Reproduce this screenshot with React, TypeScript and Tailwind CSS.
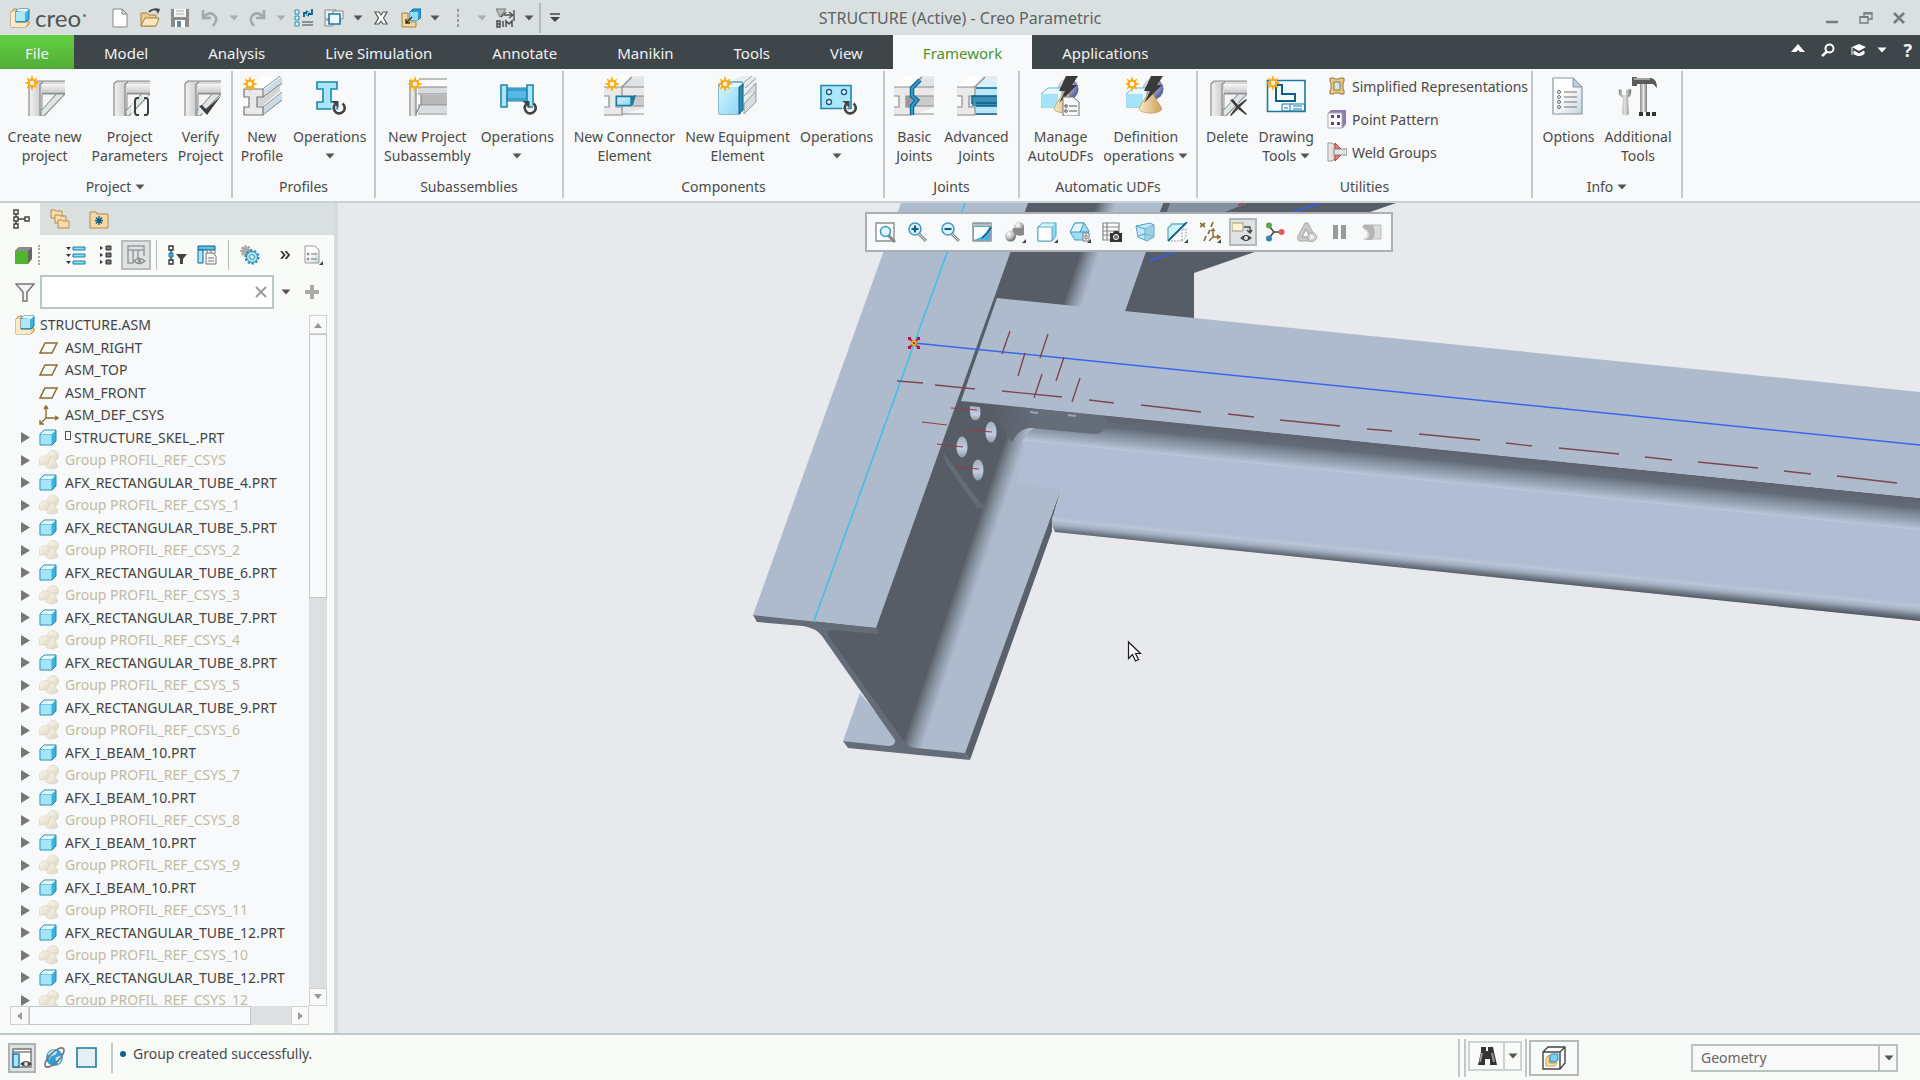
import React from "react";

type IconProps = { children: React.ReactNode; className: string; box: string };

function Icon({ children, className, box }: IconProps) {
  return (
    <svg viewBox={box} className={className} fill="none" aria-hidden="true">
      {children}
    </svg>
  );
}

function Caret({ className = "text-[#555]" }: { className?: string }) {
  return (
    <svg viewBox="0 0 10 6" className={`inline-block h-[6px] w-[10px] shrink-0 ${className}`} aria-hidden="true">
      <path d="M0.500 0.500h9L5 5.500z" fill="currentColor" />
    </svg>
  );
}

/* ---------- shared drawing parts for the ribbon icons ---------- */

function Defs() {
  return (
    <svg className="absolute h-0 w-0" aria-hidden="true">
      <defs>
        <linearGradient id="steel" x1="0" y1="0" x2="1" y2="0">
          <stop offset="0" stopColor="#f2f2f2" />
          <stop offset="1" stopColor="#cfcfcf" />
        </linearGradient>
        <linearGradient id="steelV" x1="0" y1="0" x2="0" y2="1">
          <stop offset="0" stopColor="#f7f7f7" />
          <stop offset="1" stopColor="#c9c9c9" />
        </linearGradient>
        <linearGradient id="ice" x1="0" y1="0" x2="1" y2="1">
          <stop offset="0" stopColor="#d6f3fd" />
          <stop offset="1" stopColor="#8ad8f7" />
        </linearGradient>
        <linearGradient id="tan" x1="0" y1="0" x2="1" y2="0">
          <stop offset="0" stopColor="#fbe9c8" />
          <stop offset="1" stopColor="#c99f55" />
        </linearGradient>
        <linearGradient id="metal" x1="0" y1="0" x2="1" y2="0">
          <stop offset="0" stopColor="#8a8a8a" />
          <stop offset="0.5" stopColor="#e2e2e2" />
          <stop offset="1" stopColor="#777" />
        </linearGradient>
        <linearGradient id="paper" x1="0" y1="0" x2="1" y2="1">
          <stop offset="0.4" stopColor="#fff" />
          <stop offset="1" stopColor="#c3d4de" />
        </linearGradient>
        <radialGradient id="ball" cx="0.35" cy="0.3" r="0.8">
          <stop offset="0" stopColor="#fff" />
          <stop offset="0.5" stopColor="#bdbdbd" />
          <stop offset="1" stopColor="#555" />
        </radialGradient>
        <radialGradient id="violet" cx="0.3" cy="0.3" r="0.8">
          <stop offset="0" stopColor="#f2f3fb" />
          <stop offset="1" stopColor="#4c5796" />
        </radialGradient>
        <linearGradient id="cream" x1="0" y1="0" x2="1" y2="1">
          <stop offset="0" stopColor="#fbf8ec" />
          <stop offset="1" stopColor="#dcd5c0" />
        </linearGradient>
      </defs>
    </svg>
  );
}

function Burst({ x = 7, y = 7 }: { x?: number; y?: number }) {
  return (
    <g transform={`translate(${x} ${y})`}>
      <path
        d="M0-8L1.600-3.600 5.500-5.500 3.600-1.600 8 0 3.600 1.600 5.500 5.500 1.600 3.600 0 8-1.600 3.600-5.500 5.500-3.600 1.600-8 0-3.600-1.600-5.500-5.500-1.600-3.600z"
        fill="#ffab12"
      />
      <circle r="2.800" fill="#fff8d8" stroke="#f39a12" strokeWidth="0.800" />
    </g>
  );
}

function Cycle({ x = 30, y = 31 }: { x?: number; y?: number }) {
  return (
    <g transform={`translate(${x} ${y})`}>
      <path d="M3.500-4.500A5.500 5.500 0 1 1-4-3.600" stroke="#fff" strokeWidth="5" opacity="0.700" />
      <path d="M3.500-4.500A5.500 5.500 0 1 1-4-3.600" stroke="#444" strokeWidth="2.600" />
      <path d="M-7.500-7h7v7z" fill="#444" />
    </g>
  );
}

function FrameBase() {
  return (
    <g>
      <path d="M4 7l3-2h33v3H17v32H4z" fill="#d9d9d9" />
      <path d="M4 7.500h11V40H4z" fill="url(#steel)" />
      <path d="M4 40V7.500L7 5h33M15 40V8l3-2" stroke="#8a8a8a" strokeWidth="1.200" />
      <path d="M17 8h23v9H17z" fill="url(#steelV)" />
      <path d="M17 17.500h23" stroke="#8a8a8a" strokeWidth="1.400" />
      <path d="M31 18h9L19 40h-3v-6z" fill="#dfe5e5" stroke="#8e9494" strokeWidth="1.200" />
      <path d="M17 18v16l14-16z" fill="#f4f4f4" stroke="#8e9494" />
    </g>
  );
}

function BeamEnd() {
  return (
    <g>
      <path d="M2 11L14 0h26v32L18 39H0V31h5V20H0V11z" fill="#e9e9ea" />
      <path d="M0 11L12 0h14L16 11z" fill="#fff" />
      <path d="M18 11L26 3h14v9H18z" fill="#dfe2e6" />
      <path d="M18 20h22v10H18z" fill="#cbcbcb" />
      <path d="M0 11h18v9h-6v11h6v8H0M0 20h5v11H0M18 11L28 1M18 11h22M18 20h22M18 30h22M18 38h22" stroke="#8c8c8c" strokeWidth="1.200" />
    </g>
  );
}

function UdfBase() {
  return (
    <g>
      <circle cx="27" cy="13" r="10.500" fill="url(#violet)" />
      <path d="M0 18l7-6h14v16l-4 3H0z" fill="#eaf8fd" stroke="#58b7d9" />
      <path d="M0.500 18H17v13H0.500z" fill="#a4e3f9" />
      <path d="M22 17c-4 8-8 12-9 16 3 5 19 6 23 0-2-5-6-8-9-16z" fill="url(#tan)" stroke="#c79c52" strokeWidth="0.800" />
      <path d="M25 0h12l-6 9h5L18 27l6-12h-6z" fill="#3a3a3a" />
    </g>
  );
}

const ribbonIcons: Record<string, React.ReactNode> = {
  create: (
    <>
      <FrameBase />
      <Burst />
    </>
  ),
  params: (
    <>
      <FrameBase />
      <path d="M29 21h-3q-3 0-3 3v12q0 3 3 3h3M33 21h3q3 0 3 3v12q0 3-3 3h-3" stroke="#fff" strokeWidth="4" opacity="0.600" />
      <path d="M29 22h-2q-2 0-2 3v11q0 3 2 3h2M34 22h2q2 0 2 3v11q0 3-2 3h-2" stroke="#3f3f3f" strokeWidth="2" />
    </>
  ),
  verify: (
    <>
      <FrameBase />
      <path d="M19 31l6 7 14-15" stroke="#fff" strokeWidth="5" opacity="0.600" />
      <path d="M18 30l3-1 4 4 15-13-14 19z" fill="#3f3f3f" />
    </>
  ),
  profile: (
    <>
      <path d="M20 1h20L22 14H3z" fill="#fff" />
      <path d="M22 14L40 0v9L22 22v9l18-14v8L20 39z" fill="#c9dbe4" />
      <path d="M15 21l7-1 16-13v8L20 30h-5z" fill="#d5d5d5" />
      <path d="M2 13h19v8h-6v10h6v8H2v-8h5V21H2z" fill="#e9e9e9" stroke="#777" strokeWidth="1.200" />
      <path d="M21 13L38 0M21 21L40 7M21 31l19-15M21 39l19-15" stroke="#888" />
      <Burst x={8} y={8} />
    </>
  ),
  profileOps: (
    <>
      <path d="M7 6h20v7h-6v13h6v7H7v-7h6V13H7z" fill="#a9e6fb" stroke="#1f87ad" strokeWidth="1.600" />
      <Cycle x={29} y={32} />
    </>
  ),
  subassembly: (
    <>
      <path d="M3 4h6v36H3z" fill="url(#steel)" />
      <path d="M11 2h29v36H11z" fill="#fbfbfb" />
      <path d="M11 11h29v7H11zM11 30h29v7H11z" fill="#d9dcde" />
      <path d="M14 19h26v10H14z" fill="#b9b9b9" />
      <path d="M3 4v36M9 4v36M11 11h29M11 18h29M14 19v10M11 29h29M11 38h29M9 38l4-9M12 3h28" stroke="#858585" strokeWidth="1.200" />
      <Burst x={8} y={8} />
    </>
  ),
  subOps: (
    <>
      <path d="M10 12h20v13H10z" fill="#57b7e6" stroke="#1f87ad" />
      <path d="M10 14h20M10 23h20" stroke="#1f87ad" strokeWidth="1.200" />
      <path d="M4 9h6v22H4zM30 9h6v22h-6z" fill="#a9e6fb" stroke="#1f87ad" strokeWidth="1.600" />
      <Cycle x={33} y={32} />
    </>
  ),
  connector: (
    <>
      <BeamEnd />
      <path d="M12 20h16l4-1-3 10H12z" fill="#1c7aa5" />
      <path d="M12.500 20.500H27v9H12.500z" fill="url(#ice)" stroke="#1c7aa5" strokeWidth="1.400" />
      <Burst x={8} y={8} />
    </>
  ),
  equipment: (
    <>
      <path d="M8 8L22 0h16v8L26 38l-4-28z" fill="#e6eef2" />
      <path d="M26 20L38 7v8L26 28v10l12-12V16" fill="#d5dde1" stroke="#999" />
      <path d="M24 8L34 0M27 12L38 2" stroke="#999" />
      <path d="M1 8l3-2h20l1 2-3 30H1z" fill="#f0fbff" stroke="#1c7aa5" />
      <path d="M1 11h20v27H1z" fill="url(#ice)" />
      <path d="M21 11l4-3v26l-4 4z" fill="#2b8cb4" stroke="#0f5f87" />
      <Burst x={7} y={8} />
    </>
  ),
  plateOps: (
    <>
      <path d="M4 9.500h30v23H4z" fill="#a9e6fb" stroke="#1f87ad" strokeWidth="1.600" />
      <g fill="#fff" stroke="#1f5f7f" strokeWidth="1.400">
        <circle cx="12" cy="16" r="2.500" />
        <circle cx="27" cy="16" r="2.500" />
        <circle cx="12" cy="26" r="2.500" />
      </g>
      <Cycle x={33} y={32} />
    </>
  ),
  basic: (
    <>
      <BeamEnd />
      <path d="M12 20h10v11H12z" fill="#999" />
      <path d="M26 4l-8 8v8l5 4-5 6v9" stroke="#0f6a99" strokeWidth="4.500" />
      <path d="M26 4l-8 8v8l5 4-5 6v9" stroke="#3fa5d3" strokeWidth="1.600" />
    </>
  ),
  advanced: (
    <>
      <BeamEnd />
      <path d="M19 11L28 3h12v9H19z" fill="#d5f2fb" />
      <path d="M19 12h21v26H19z" fill="#b9e9f9" />
      <path d="M15 20h25v10H15z" fill="#3f8fb5" />
      <path d="M40 20H15v8M19 12h21M19 30h21M19 38h21M40 27H19" stroke="#0f5f87" strokeWidth="1.400" />
    </>
  ),
  manage: (
    <>
      <UdfBase />
      <path d="M22 21h10l6 5v14H22z" fill="#f4f8fa" stroke="#777" />
      <path d="M28 30h8M28 35h8" stroke="#555" />
      <circle cx="25" cy="30" r="1.300" stroke="#555" />
      <circle cx="25" cy="35" r="1.300" stroke="#555" />
    </>
  ),
  definition: (
    <>
      <UdfBase />
      <Burst x={6} y={8} />
    </>
  ),
  remove: (
    <>
      <FrameBase />
      <path d="M25 24l15 15M40 24L25 39" stroke="#fff" strokeWidth="5" opacity="0.600" />
      <path d="M23 24l3-1 5 6 8-6 1 1-7 7 7 7-1 1-8-6-7 7-1-1 6-8z" fill="#3f3f3f" />
    </>
  ),
  drawing: (
    <>
      <path d="M1.500 4.500H39v31H1.500z" fill="#f4fbff" stroke="#1c7aa5" strokeWidth="1.600" />
      <path d="M10 9h6v9h13v7H10z" stroke="#0f5f87" strokeWidth="2" />
      <path d="M16 28h23v7H16zM24 28v7M18 32h4M27 30h9M27 33h9" stroke="#1c7aa5" />
      <Burst x={7} y={7} />
    </>
  ),
  options: (
    <>
      <path d="M5 2h20l9 9v27H5z" fill="url(#paper)" stroke="#8a979f" strokeWidth="1.200" />
      <path d="M25 2v9h9z" fill="#c0d0da" stroke="#8a979f" />
      <path d="M16 16h13M16 21h13M16 26h13M16 31h13" stroke="#777" strokeWidth="1.200" />
      <g stroke="#666">
        <circle cx="11" cy="16" r="1.500" />
        <circle cx="11" cy="21" r="1.500" />
        <circle cx="11" cy="26" r="1.500" />
        <circle cx="11" cy="31" r="1.500" />
      </g>
    </>
  ),
  tools: (
    <>
      <path d="M1 13l3 1v5h4v-5l5-1c1 5-1 8-3 9l1 16q-3 3-7 0l1-16c-4-2-5-5-4-9z" fill="url(#metal)" />
      <path d="M22 8h7v28h-7z" fill="url(#metal)" />
      <path d="M14 1h5v1h14q6 1 6 10l-4-4H19v2h-5z" fill="#5b5b5b" />
      <path d="M16 3h16" stroke="#bbb" strokeWidth="1.500" />
      <path d="M21 36h4v4h-4zM28 36h4v4h-4zM34 36h4v4h-4z" fill="#333" />
    </>
  ),
};

type Tool = { icon: string; lines: string[]; caret?: "below" | "inline" };

function RibbonButton({ icon, lines, caret }: Tool) {
  return (
    <button type="button" className="flex flex-col items-center px-[5px] hover:bg-[#e4eef2]">
      <Icon box="0 0 40 40" className="h-10 w-10">
        {ribbonIcons[icon]}
      </Icon>
      <span className="mt-[11px] flex flex-col items-center whitespace-nowrap">
        <span>{lines[0]}</span>
        {caret === "below" ? (
          <span className="flex h-[19px] items-center">
            <Caret />
          </span>
        ) : (
          lines[1] && (
            <span className="flex items-center gap-1">
              {lines[1]}
              {caret === "inline" && <Caret />}
            </span>
          )
        )}
      </span>
    </button>
  );
}

function RibbonGroup({
  title,
  tools,
  className,
  caret,
  children,
}: {
  title: string;
  tools: Tool[];
  className: string;
  caret?: boolean;
  children?: React.ReactNode;
}) {
  return (
    <section
      aria-label={title}
      className={`flex shrink-0 flex-col items-center justify-between border-r-2 border-[#c3c9cb] ${className}`}
    >
      <div className="flex w-full justify-center pt-[5px]">
        {tools.map((t) => (
          <RibbonButton key={t.icon} {...t} />
        ))}
        {children}
      </div>
      <div className="flex items-center gap-1 pb-[2px]">
        {title}
        {caret && <Caret />}
      </div>
    </section>
  );
}

function UtilityLinks() {
  const items: { label: string; art: React.ReactNode }[] = [
    {
      label: "Simplified Representations",
      art: (
        <>
          <path d="M3 2h4l1 1h4l1-1h4v4l-1 1v6l1 1v4h-4l-1-1H8l-1 1H3v-4l1-1V7L3 6z" fill="#e8c687" stroke="#9a7433" />
          <path d="M7 6h6v8H7z" fill="#c4ecf8" stroke="#9a7433" />
        </>
      ),
    },
    {
      label: "Point Pattern",
      art: (
        <>
          <path d="M1 4l3-3h15v14l-3 4H1z" fill="#8f7cb5" />
          <path d="M1 4h14v15H1z" fill="#fff" stroke="#aaa" />
          <path d="M4 6h3v3H4zM10 6h3v3h-3zM4 13h3v3H4zM10 13h3v3h-3z" fill="#5b3f92" />
        </>
      ),
    },
    {
      label: "Weld Groups",
      art: (
        <>
          <path d="M1 1h4l3 2v14l-3 2H1z" fill="url(#steel)" stroke="#999" />
          <path d="M8 1l6 6H8zM8 19l6-6H8z" fill="#f07a7a" stroke="#c33" />
          <path d="M7 7h13v6H7z" fill="#e3e3e3" stroke="#888" />
        </>
      ),
    },
  ];
  return (
    <div className="flex flex-col gap-[13px] pl-2">
      {items.map((i) => (
        <button key={i.label} type="button" className="flex items-center gap-[5px] whitespace-nowrap hover:bg-[#e4eef2]">
          <Icon box="0 0 20 20" className="h-5 w-5">
            {i.art}
          </Icon>
          {i.label}
        </button>
      ))}
    </div>
  );
}

/* ---------- title bar ---------- */

const quickArt: Record<string, React.ReactNode> = {
  New: <path d="M3 1h9l5 5v13H3zM12 1v5h5" fill="#fff" stroke="#888" />,
  Open: (
    <>
      <path d="M1 5h6l2 2h7v11H1z" fill="#e9c98d" stroke="#a8833f" />
      <path d="M1 18l4-8h14l-3 8z" fill="#fbe7bf" stroke="#a8833f" />
      <path d="M9 4q4-4 8-2" stroke="#444" strokeWidth="1.800" />
      <path d="M15 0l5 1-2 5z" fill="#444" />
    </>
  ),
  Save: (
    <>
      <path d="M1 1h18v18H1z" fill="#8b8b8b" />
      <path d="M4 1h12v8H4z" fill="#f5f5f5" />
      <path d="M5 12h10v7H5z" fill="#fff" />
      <path d="M7 13h4v6H7z" fill="#5d86a5" />
      <path d="M6 3h8M6 6h8" stroke="#aaa" />
    </>
  ),
  Undo: <path d="M3 2v8h8M4 9q5-6 10-2t-1 11" stroke="#a3a8a8" strokeWidth="2.600" />,
  Redo: <path d="M17 2v8H9M16 9Q11 3 6 7t1 11" stroke="#a3a8a8" strokeWidth="2.600" />,
  Regenerate: (
    <>
      <path d="M1 2h4v4H1zM1 8h4v4H1zM1 14h4v4H1z" fill="#d5f2fb" stroke="#2b8cb4" />
      <path d="M8 14h11M8 17h11" stroke="#777" strokeWidth="1.400" />
      <path d="M10 9V5h3M18 1v5h-4" stroke="#0f5f87" strokeWidth="1.800" />
      <path d="M12 2l4 3-4 3zM15 3l-3 3 3 3z" fill="#0f5f87" />
    </>
  ),
  Windows: (
    <>
      <path d="M1 2h11v9H1z" fill="#eee" stroke="#888" />
      <path d="M9 3h10v8H9zM1 12h8v6H1z" fill="#f4f4f4" stroke="#888" />
      <path d="M5 6h11v10H5z" fill="#e9f8fd" stroke="#1c7aa5" strokeWidth="1.600" />
    </>
  ),
  "Close window": (
    <path d="M4 4h4l2 3 2-3h4l-3.500 6L16 16h-4l-2-3-2 3H4l3.500-6z" fill="#fff" stroke="#555" strokeWidth="1.200" />
  ),
  Placement: (
    <>
      <path d="M1 5h6v9h8v5H1z" fill="#f4d59a" stroke="#a8833f" />
      <path d="M9 4l3-3h8v8l-3 3H9z" fill="#2b9bd0" stroke="#0f6a99" />
      <path d="M9 4h8v8H9z" fill="#8fdcf8" />
      <path d="M11 9l-6 6M5 11v4h4" stroke="#333" strokeWidth="1.500" />
    </>
  ),
  Separator: <path d="M10 1v3M10 6v3M10 11v3M10 16v3" stroke="#888" strokeWidth="1.600" />,
  BIM: (
    <>
      <path d="M1 1h10L5 9z" fill="#bbb" stroke="#777" />
      <path d="M6 9l5-5M9 7h8M14 4l4 3-4 3M19 2v11" stroke="#555" strokeWidth="1.400" />
      <path d="M2 13v6h3v-3H2h3v-3zM8 13v6M11 19v-6l3 3 3-3v6" stroke="#444" strokeWidth="1.400" />
    </>
  ),
};

function QuickButton({ name, caret, faded }: { name: string; caret?: boolean; faded?: boolean }) {
  return (
    <span className="flex items-center">
      <button type="button" aria-label={name} className="flex w-[30px] justify-center">
        <Icon box="0 0 20 20" className="h-5 w-5">
          {quickArt[name]}
        </Icon>
      </button>
      {caret && (
        <button type="button" aria-label={`${name} menu`} className="flex w-[17px] justify-center">
          <Caret className={faded ? "text-[#aab0b0]" : "text-[#555]"} />
        </button>
      )}
    </span>
  );
}

function CreoMark({ className }: { className: string }) {
  return (
    <Icon box="0 0 20 20" className={className}>
      <path d="M1 4l3-3h3v12h12v3l-3 3H1z" fill="#f2d193" stroke="#b28a42" />
      <path d="M1 4h4v11h11v4H1z" fill="#fdebc8" />
      <path d="M6 3l3-2h10v10l-3 3H6z" fill="#3fb2df" stroke="#1c7aa5" />
      <path d="M6 4h9v9H6z" fill="#aee6f9" />
      <path d="M6 3l3-2h10l-3 3z" fill="#e8f9fe" />
    </Icon>
  );
}

function TitleBar() {
  return (
    <header className="relative flex h-[35px] shrink-0 items-center bg-[#dae0df]">
      <div className="flex w-[105px] items-center gap-[5px] pl-[10px]">
        <CreoMark className="h-5 w-5" />
        <span className="flex gap-[2px] font-['Lato',sans-serif] text-[24px] leading-[24px] text-[#4d5558]">
          creo
          <span className="mt-2 h-[3px] w-[3px] rounded-full bg-[#6b7376]" />
        </span>
      </div>
      <QuickButton name="New" />
      <QuickButton name="Open" />
      <QuickButton name="Save" />
      <QuickButton name="Undo" caret faded />
      <QuickButton name="Redo" caret faded />
      <QuickButton name="Regenerate" />
      <QuickButton name="Windows" caret />
      <QuickButton name="Close window" />
      <QuickButton name="Placement" caret />
      <QuickButton name="Separator" caret faded />
      <QuickButton name="BIM" caret />
      <button type="button" aria-label="Customize toolbar" className="ml-[2px] flex h-[30px] items-center border-l-2 border-[#b4bbbb] pl-2">
        <Icon box="0 0 12 10" className="h-[10px] w-3">
          <path d="M1 1h10" stroke="#444" strokeWidth="1.500" />
          <path d="M1 4h10L6 9z" fill="#444" />
        </Icon>
      </button>
      <h1 className="pointer-events-none absolute inset-0 flex items-center justify-center text-[16px] text-[#5b6366]">
        STRUCTURE (Active) - Creo Parametric
      </h1>
      <div className="ml-auto flex items-center gap-[18px] pr-[14px] text-[#777d7e]">
        <button type="button" aria-label="Minimize">
          <Icon box="0 0 16 14" className="h-[14px] w-4">
            <path d="M2 11h12" stroke="currentColor" strokeWidth="2.500" />
          </Icon>
        </button>
        <button type="button" aria-label="Restore">
          <Icon box="0 0 16 14" className="h-[14px] w-4">
            <path d="M2 6h8v6H2zM6 6V2h8v6h-4" stroke="currentColor" strokeWidth="1.400" />
            <path d="M2 6h8M6 2.500h8" stroke="currentColor" strokeWidth="2.200" />
          </Icon>
        </button>
        <button type="button" aria-label="Close">
          <Icon box="0 0 14 14" className="h-[14px] w-[14px]">
            <path d="M2 2l10 10M12 2L2 12" stroke="currentColor" strokeWidth="2.600" />
          </Icon>
        </button>
      </div>
    </header>
  );
}

function TabBar() {
  const tabs = ["Model", "Analysis", "Live Simulation", "Annotate", "Manikin", "Tools", "View", "Framework", "Applications"];
  return (
    <nav className="flex h-[34px] shrink-0 bg-[#3e4649] text-[15px] text-[#f0f2f2]">
      <button type="button" className="w-[74px] bg-gradient-to-b from-[#63cf42] to-[#52ae37] pt-[2px]">
        File
      </button>
      {tabs.map((t) => (
        <button
          key={t}
          type="button"
          className={t === "Framework" ? "bg-[#f8f9fb] px-[30px] pt-[2px] text-[#4f9030]" : "px-[30px] pt-[2px]"}
        >
          {t}
        </button>
      ))}
      <div className="ml-auto flex items-center gap-4 pr-2 pb-1">
        <button type="button" aria-label="Collapse ribbon">
          <Icon box="0 0 14 10" className="mb-1 h-[10px] w-[14px]">
            <path d="M0 9l7-8 7 8h-5L7 7 5 9z" fill="#fff" />
          </Icon>
        </button>
        <button type="button" aria-label="Search">
          <Icon box="0 0 14 14" className="h-[14px] w-[14px]">
            <circle cx="8.500" cy="5.500" r="4" stroke="#fff" strokeWidth="2" />
            <path d="M6 8.500L1 13" stroke="#fff" strokeWidth="2.400" />
          </Icon>
        </button>
        <button type="button" aria-label="Learning" className="flex items-center gap-[10px]">
          <Icon box="0 0 16 12" className="h-3 w-4">
            <path d="M8 0l7 3-7 4-7-4z" fill="#fff" />
            <path d="M3 7l5 3 5-3v3l-5 2-5-2zM1 3v8" fill="#fff" stroke="#fff" />
          </Icon>
          <Caret className="text-white" />
        </button>
        <button type="button" aria-label="Help" className="text-[18px] font-bold leading-[18px]">
          ?
        </button>
      </div>
    </nav>
  );
}

function Ribbon() {
  return (
    <div className="flex h-[134px] shrink-0 overflow-hidden border-b-2 border-[#c8d2d2] bg-[#f8f9fb] pt-[2px] pb-[3px] text-[14px] leading-[19px] text-[#4a4a4a]">
      <RibbonGroup
        title="Project"
        caret
        className="w-[233px]"
        tools={[
          { icon: "create", lines: ["Create new", "project"] },
          { icon: "params", lines: ["Project", "Parameters"] },
          { icon: "verify", lines: ["Verify", "Project"] },
        ]}
      />
      <RibbonGroup
        title="Profiles"
        className="w-[143px]"
        tools={[
          { icon: "profile", lines: ["New", "Profile"] },
          { icon: "profileOps", lines: ["Operations"], caret: "below" },
        ]}
      />
      <RibbonGroup
        title="Subassemblies"
        className="w-[188px]"
        tools={[
          { icon: "subassembly", lines: ["New Project", "Subassembly"] },
          { icon: "subOps", lines: ["Operations"], caret: "below" },
        ]}
      />
      <RibbonGroup
        title="Components"
        className="w-[321px]"
        tools={[
          { icon: "connector", lines: ["New Connector", "Element"] },
          { icon: "equipment", lines: ["New Equipment", "Element"] },
          { icon: "plateOps", lines: ["Operations"], caret: "below" },
        ]}
      />
      <RibbonGroup
        title="Joints"
        className="w-[135px]"
        tools={[
          { icon: "basic", lines: ["Basic", "Joints"] },
          { icon: "advanced", lines: ["Advanced", "Joints"] },
        ]}
      />
      <RibbonGroup
        title="Automatic UDFs"
        className="w-[178px]"
        tools={[
          { icon: "manage", lines: ["Manage", "AutoUDFs"] },
          { icon: "definition", lines: ["Definition", "operations"], caret: "inline" },
        ]}
      />
      <RibbonGroup
        title="Utilities"
        className="w-[335px]"
        tools={[
          { icon: "remove", lines: ["Delete"] },
          { icon: "drawing", lines: ["Drawing", "Tools"], caret: "inline" },
        ]}
      >
        <UtilityLinks />
      </RibbonGroup>
      <RibbonGroup
        title="Info"
        caret
        className="w-[150px]"
        tools={[
          { icon: "options", lines: ["Options"] },
          { icon: "tools", lines: ["Additional", "Tools"] },
        ]}
      />
    </div>
  );
}

/* ---------- model tree ---------- */

type NodeKind = "root" | "plane" | "csys" | "part" | "group" | "skeleton";

const treeNodes: [NodeKind, string][] = [
  ["root", "STRUCTURE.ASM"],
  ["plane", "ASM_RIGHT"],
  ["plane", "ASM_TOP"],
  ["plane", "ASM_FRONT"],
  ["csys", "ASM_DEF_CSYS"],
  ["skeleton", "STRUCTURE_SKEL_.PRT"],
  ["group", "Group PROFIL_REF_CSYS"],
  ["part", "AFX_RECTANGULAR_TUBE_4.PRT"],
  ["group", "Group PROFIL_REF_CSYS_1"],
  ["part", "AFX_RECTANGULAR_TUBE_5.PRT"],
  ["group", "Group PROFIL_REF_CSYS_2"],
  ["part", "AFX_RECTANGULAR_TUBE_6.PRT"],
  ["group", "Group PROFIL_REF_CSYS_3"],
  ["part", "AFX_RECTANGULAR_TUBE_7.PRT"],
  ["group", "Group PROFIL_REF_CSYS_4"],
  ["part", "AFX_RECTANGULAR_TUBE_8.PRT"],
  ["group", "Group PROFIL_REF_CSYS_5"],
  ["part", "AFX_RECTANGULAR_TUBE_9.PRT"],
  ["group", "Group PROFIL_REF_CSYS_6"],
  ["part", "AFX_I_BEAM_10.PRT"],
  ["group", "Group PROFIL_REF_CSYS_7"],
  ["part", "AFX_I_BEAM_10.PRT"],
  ["group", "Group PROFIL_REF_CSYS_8"],
  ["part", "AFX_I_BEAM_10.PRT"],
  ["group", "Group PROFIL_REF_CSYS_9"],
  ["part", "AFX_I_BEAM_10.PRT"],
  ["group", "Group PROFIL_REF_CSYS_11"],
  ["part", "AFX_RECTANGULAR_TUBE_12.PRT"],
  ["group", "Group PROFIL_REF_CSYS_10"],
  ["part", "AFX_RECTANGULAR_TUBE_12.PRT"],
  ["group", "Group PROFIL_REF_CSYS_12"],
];

function NodeIcon({ kind }: { kind: NodeKind }) {
  if (kind === "root") return <CreoMark className="h-5 w-5" />;
  return (
    <Icon box="0 0 20 20" className="h-5 w-5 shrink-0">
      {kind === "plane" && <path d="M6 5h12l-5 10H1z" stroke="#8a6d33" strokeWidth="1.500" />}
      {kind === "csys" && (
        <path d="M7 1v12h12M7 13l-6 6M5 4l2-3 2 3M16 11l3 2-3 2M1 15v4h4" stroke="#8a6d33" strokeWidth="1.400" />
      )}
      {(kind === "part" || kind === "skeleton") && (
        <>
          <path d="M1 6l4-4h12v11l-4 4H1z" fill="#36b3e2" stroke="#2b87a8" />
          <path d="M1.500 6.500h11v10h-11z" fill="#a5e5fa" />
          <path d="M1.500 6L5 2.500h11.500L13 6z" fill="#e4f8fe" />
        </>
      )}
      {kind === "group" && (
        <g fill="url(#cream)" stroke="#ddd7c6" strokeWidth="0.800">
          <circle cx="14" cy="6" r="5.500" />
          <path d="M0.500 9l3-3h8v7l-3 2h-8z" />
          <path d="M12 8l-5 9q5 4 12 0l-4-9z" />
        </g>
      )}
    </Icon>
  );
}

function ModelTree() {
  return (
    <ul className="min-w-0 flex-1 text-[14px] leading-[22px]">
      {treeNodes.map(([kind, label], i) => {
        const expandable = kind === "part" || kind === "group" || kind === "skeleton";
        return (
          <li
            key={i}
            className={`flex items-center whitespace-nowrap odd:h-[22px] even:h-[23px] ${
              kind === "group" ? "text-[#c2b9a3]" : "text-[#444]"
            }`}
          >
            {kind !== "root" && (
              <span className="flex w-6 shrink-0 justify-center pr-1">
                {expandable && (
                  <button type="button" aria-label={`Expand ${label}`}>
                    <Icon box="0 0 9 11" className="h-[11px] w-[9px]">
                      <path d="M0 0l9 5.500L0 11z" fill="#777" />
                    </Icon>
                  </button>
                )}
              </span>
            )}
            <NodeIcon kind={kind} />
            {kind === "skeleton" && <span className="mb-1 ml-[6px] h-[9px] w-[6px] border border-[#555]" />}
            <span className={kind === "skeleton" ? "ml-[3px]" : kind === "root" ? "ml-[5px]" : "ml-[6px]"}>{label}</span>
          </li>
        );
      })}
    </ul>
  );
}

const sideArt: Record<string, React.ReactNode> = {
  tree: <path d="M3 1h4v4H3zM3 8h4v4H3zM3 15h4v4H3zM14 8h4v4h-4zM7 10h7M5 5v3M5 12v3" stroke="#444" strokeWidth="1.500" />,
  folders: (
    <g fill="#f7dcae" stroke="#b48a48">
      <path d="M1 1h4l1 1h6v7H1z" />
      <path d="M5 6h4l1 1h6v7H5z" />
      <path d="M8 11h4l1 1h6v7H8z" />
    </g>
  ),
  favorite: (
    <>
      <path d="M1 3h6l1 2h11v14H1z" fill="#f5d8a5" stroke="#b48a48" />
      <path d="M10 7v9M6 11.500h8M7 8.500l6 6M13 8.500l-6 6" stroke="#0f5f87" strokeWidth="1.400" />
    </>
  ),
  cube: (
    <>
      <path d="M2 6l4-4h13v12l-4 5z" fill="#666" />
      <path d="M2 6h13v13H2z" fill="#4fb52f" />
      <path d="M2 6l4-4h13l-4 4z" fill="#8d8d8d" />
    </>
  ),
  expand: (
    <>
      <path d="M7 2h12v3H7zM7 9h12v3H7zM7 16h12v3H7z" fill="#8adcf8" stroke="#1c7aa5" />
      <path d="M0 2h5L2.500 5zM0 9h5l-2.500 3zM0 16h5l-2.500 3z" fill="#333" />
    </>
  ),
  collapse: (
    <>
      <path d="M10 1h5v4h-5zM10 8h5v4h-5zM10 15h5v4h-5z" fill="#777" stroke="#333" />
      <path d="M4 1v4l3-2zM4 8v4l3-2zM4 15v4l3-2z" fill="#333" />
    </>
  ),
  columns: (
    <>
      <path d="M2 1h16v4H2zM2 5h5v13H2zM7 5h5v13M18 5v6M2 18h5" stroke="#999" strokeWidth="1.500" />
      <path d="M8 16q5-5 11 0-6 5-11 0z" fill="#ddd" stroke="#888" strokeWidth="1.200" />
      <circle cx="13.500" cy="16" r="1.600" fill="#888" />
    </>
  ),
  filterTree: (
    <>
      <path d="M2 1h4v4H2zM2 15h4v4H2zM4 5v10" stroke="#333" strokeWidth="1.400" />
      <path d="M2 8h4v4H2z" fill="#3fa9d6" stroke="#1c7aa5" />
      <path d="M9 9h11l-4 5v5h-3v-5z" fill="#444" />
    </>
  ),
  columnSetup: (
    <>
      <path d="M1 1h17v4H1z" fill="#5fc0e6" stroke="#0f5f87" />
      <path d="M1 5h5v13H1z" fill="#a9e6fb" stroke="#0f5f87" />
      <path d="M10 5v4M14 5v4M18 5v4" stroke="#777" />
      <path d="M9 8h7l3 3v8H9z" fill="#f5f5f5" stroke="#777" />
      <path d="M11 13h6M11 16h6" stroke="#777" />
    </>
  ),
  gears: (
    <>
      <circle cx="6" cy="6" r="4.500" stroke="#999" strokeWidth="2.400" strokeDasharray="2 1.200" />
      <circle cx="6" cy="6" r="4" fill="#aaa" />
      <circle cx="12" cy="12" r="6.500" stroke="#2b8cb4" strokeWidth="2" strokeDasharray="2.400 1.600" />
      <circle cx="12" cy="12" r="5.500" fill="#a9dff3" stroke="#2b8cb4" />
      <circle cx="12" cy="12" r="2.300" fill="#fff" stroke="#2b8cb4" />
    </>
  ),
  page: (
    <>
      <path d="M2 1h10l4 4v13H2z" fill="url(#paper)" stroke="#999" />
      <circle cx="5" cy="9" r="1" stroke="#777" />
      <circle cx="5" cy="14" r="1" stroke="#777" />
      <path d="M8 9h6M8 14h6" stroke="#777" />
      <path d="M20 16v4h-4z" fill="#444" />
    </>
  ),
};

function SideButton({ name, label, className = "w-[30px]" }: { name: string; label: string; className?: string }) {
  return (
    <button type="button" aria-label={label} className={`flex h-[30px] shrink-0 items-center justify-center ${className}`}>
      <Icon box="0 0 20 20" className="h-5 w-5">
        {sideArt[name]}
      </Icon>
    </button>
  );
}

function ScrollArrow({ d }: { d: string }) {
  return (
    <Icon box="0 0 10 10" className="h-[10px] w-[10px]">
      <path d={d} fill="#999" />
    </Icon>
  );
}

function SidePanel() {
  return (
    <aside className="flex w-[338px] shrink-0 flex-col border-r-4 border-[#d3dddd] bg-[#f9fbf9]">
      <div className="flex h-8 shrink-0 items-center bg-[#dae0df]">
        <div className="flex h-full w-10 items-center justify-center bg-[#f9fbf9] pl-[2px]">
          <SideButton name="tree" label="Model Tree" />
        </div>
        <SideButton name="folders" label="Folder Browser" className="w-[39px]" />
        <SideButton name="favorite" label="Favorites" className="w-10" />
      </div>
      <div className="flex h-[40px] shrink-0 items-center pl-2">
        <SideButton name="cube" label="Show model" />
        <span className="mr-[21px] h-5 w-[2px] border-l-2 border-dotted border-[#aaa]" />
        <SideButton name="expand" label="Expand all" />
        <SideButton name="collapse" label="Collapse all" />
        <SideButton name="columns" label="Tree columns" className="w-[30px] border-2 border-[#b9bcbe] bg-[#dfe1e2]" />
        <span className="mx-[5px] h-[30px] w-[1px] bg-[#b5b9ba]" />
        <SideButton name="filterTree" label="Tree filters" />
        <SideButton name="columnSetup" label="Column setup" />
        <span className="mx-[6px] h-[30px] w-[1px] bg-[#b5b9ba]" />
        <SideButton name="gears" label="Settings" />
        <button type="button" aria-label="More tools" className="flex flex-1 justify-center pl-2">
          <Icon box="0 0 10 8" className="h-2 w-[10px]">
            <path d="M1 0l3.500 4L1 8M5.500 0L9 4 5.500 8" stroke="#333" strokeWidth="1.800" />
          </Icon>
        </button>
        <SideButton name="page" label="Report" className="mr-1 w-[34px]" />
      </div>
      <div className="flex h-[34px] shrink-0 items-center">
        <Icon box="0 0 20 20" className="mr-[5px] ml-[15px] h-5 w-5 shrink-0">
          <path d="M1 2h18l-7 8v9H8v-9z" fill="#f3f3f3" stroke="#777" strokeWidth="1.500" />
        </Icon>
        <div className="flex h-[34px] w-[234px] items-center border-2 border-[#b9c7c6] bg-white">
          <input type="text" aria-label="Search the model tree" className="min-w-0 flex-1 px-2 text-[14px] outline-none" />
          <button type="button" aria-label="Clear search" className="px-[5px]">
            <Icon box="0 0 12 12" className="h-3 w-3">
              <path d="M1 1l10 10M11 1L1 11" stroke="#999" strokeWidth="1.800" />
            </Icon>
          </button>
        </div>
        <button type="button" aria-label="Search options" className="flex w-[23px] justify-center">
          <Caret />
        </button>
        <button type="button" aria-label="Add filter" className="flex w-[29px] justify-center">
          <Icon box="0 0 14 14" className="h-[14px] w-[14px]">
            <path d="M7 0v14M0 7h14" stroke="#aaa" strokeWidth="4" />
          </Icon>
        </button>
      </div>
      <div className="mt-[6px] ml-[10px] mr-[7px] flex h-0 flex-1 overflow-hidden">
        <div className="-mt-[1px] flex min-w-0 flex-1 overflow-hidden bg-[#f8f9fb] pl-[5px]">
          <ModelTree />
        </div>
        <div className="flex w-[18px] shrink-0 flex-col bg-[#dddfe1]">
          <button type="button" aria-label="Scroll up" className="flex h-[19px] shrink-0 items-center justify-center border border-[#cfd2d4] bg-[#f9f9fa]">
            <ScrollArrow d="M1 8h8L5 3z" />
          </button>
          <div className="h-[264px] border border-[#c3c6c8] bg-[#f8f9fb]" />
          <button type="button" aria-label="Scroll down" className="mt-auto flex h-[18px] shrink-0 items-center justify-center border border-[#cfd2d4] bg-[#f9f9fa]">
            <ScrollArrow d="M1 2h8L5 7z" />
          </button>
        </div>
      </div>
      <div className="mb-2 ml-[10px] flex h-[19px] w-[299px] shrink-0 bg-[#dddfe1]">
        <button type="button" aria-label="Scroll left" className="flex w-[19px] items-center justify-center border border-[#cfd2d4] bg-[#f9f9fa]">
          <ScrollArrow d="M7 1v8L2 5z" />
        </button>
        <div className="w-[222px] border border-[#c3c6c8] bg-[#f8f9fb]" />
        <button type="button" aria-label="Scroll right" className="ml-auto flex w-[18px] items-center justify-center border border-[#cfd2d4] bg-[#f9f9fa]">
          <ScrollArrow d="M3 1v8l5-4z" />
        </button>
      </div>
    </aside>
  );
}

/* ---------- graphics area ---------- */

const tapDashes =
  "M897 381L923 383M935 385L975 389M1002 391L1062 397M1089 400L1114 403M1141 405L1201 412M1228 414L1254 417M1280 420L1340 426M1367 429L1392 431M1419 434L1480 440M1506 443L1532 446M1559 448L1619 454M1645 457L1672 460M1698 462L1758 468M1784 471L1811 474M1837 476L1897 483";
const holeAxes =
  "M1010 331L1002 354M1048 334L1040 358M1025 353L1018 376M1064 357L1056 381M1042 374L1034 398M1080 378L1072 402";
const plateAxes = "M951 408L977 410M922 422L947 425M967 430L992 432M937 444L963 447M954 467L979 469";

function BeamModel() {
  return (
    <svg
      viewBox="338 203 1582 830"
      preserveAspectRatio="xMinYMin slice"
      className="absolute inset-0 h-full w-full"
      fill="none"
      role="img"
      aria-label="Steel frame model"
    >
      <defs>
        <linearGradient id="fillet" gradientUnits="userSpaceOnUse" x1="1200" y1="425" x2="1196.600" y2="459">
          <stop offset="0" stopColor="#5d646f" />
          <stop offset="0.330" stopColor="#636b77" />
          <stop offset="0.480" stopColor="#7a8593" />
          <stop offset="0.800" stopColor="#a2afc0" />
          <stop offset="0.950" stopColor="#b9c6da" />
          <stop offset="1" stopColor="#b0bdd2" />
        </linearGradient>
        <linearGradient id="lowerLip" gradientUnits="userSpaceOnUse" x1="1200" y1="531" x2="1198.300" y2="548">
          <stop offset="0" stopColor="#b0bdd2" />
          <stop offset="0.200" stopColor="#b9c6da" />
          <stop offset="0.500" stopColor="#a0adbd" />
          <stop offset="0.800" stopColor="#6e7783" />
          <stop offset="1" stopColor="#545b65" />
        </linearGradient>
        <linearGradient id="webFillet" gradientUnits="userSpaceOnUse" x1="940" y1="632" x2="959" y2="638.400">
          <stop offset="0" stopColor="#565d67" />
          <stop offset="0.500" stopColor="#87929f" />
          <stop offset="1" stopColor="#adbbcd" />
        </linearGradient>
        <linearGradient id="backFillet" gradientUnits="userSpaceOnUse" x1="1078" y1="258" x2="1096" y2="264">
          <stop offset="0" stopColor="#565d67" />
          <stop offset="0.500" stopColor="#8792a1" />
          <stop offset="1" stopColor="#adbbcd" />
        </linearGradient>
        <linearGradient id="hole" x1="0" y1="0" x2="0" y2="1">
          <stop offset="0" stopColor="#a3aec0" />
          <stop offset="0.600" stopColor="#c3cde0" />
          <stop offset="1" stopColor="#8c97a8" />
        </linearGradient>
        <linearGradient id="cope" gradientUnits="userSpaceOnUse" x1="990" y1="405" x2="1040" y2="410">
          <stop offset="0" stopColor="#565d67" />
          <stop offset="1" stopColor="#656d79" />
        </linearGradient>
      </defs>

      {/* rear members */}
      <path d="M1163 203H1396L1194 273V320L1120 313z" fill="#565d67" />
      <path d="M1170 203h77l-34 14h-48z" fill="#84909e" />
      <path d="M1320 203L1149 261" stroke="#2f62f2" strokeWidth="1.400" />
      <path d="M1238 205l6-2" stroke="#b03040" strokeWidth="1.400" />
      <path d="M1028 203H1163L1122 320H990z" fill="url(#backFillet)" />

      {/* web and lower flange of the main beam */}
      <path d="M860 693L843 741L895 748L900 742z" fill="#adbbcd" />
      <path d="M955 400L1025 405L1061 489L965 753L915 750L898 742L822 633L815 620H876z" fill="url(#webFillet)" />
      <path d="M1061 489L1052 521V531L970 760L965 753z" fill="#5a616b" />

      {/* cross beam side */}
      <path d="M1024 440Q1027 428 1040 427L1100 415L1920 498V621L1055 532L1052 520L1061 489L1018 484z" fill="#b0bdd2" />
      <path d="M1022 444Q1026 428 1042 427L1104 415L1920 498V540z" fill="url(#fillet)" />
      <path d="M1053 515L1920 601V621L1055 532Q1050 524 1053 515z" fill="url(#lowerLip)" />
      <path d="M955 401L1012 406L1008 432L992 476L950 474L944 440z" fill="#565d67" />
      <path d="M985 403L1104 415Q1108 424 1105 429Q1102 434 1094 434L1030 428Q1018 429 1012 442L1004 430z" fill="url(#cope)" />
      <path d="M1030 412l8 1M1068 415l8 1" stroke="#98a3b3" strokeWidth="2" />

      {/* connection plate */}
      <path d="M943 452L946 463L977 508H985L988 500L982 505z" fill="#646b76" />
      <g fill="url(#hole)">
        <path d="M970 406l10 1q2 13-5 13.500q-6-1-5-14.500z" />
        <ellipse cx="991" cy="432" rx="5.500" ry="10.500" />
        <ellipse cx="962" cy="447" rx="5.500" ry="10.500" />
        <ellipse cx="978" cy="470" rx="5.500" ry="10.500" />
      </g>

      {/* top faces */}
      <path d="M1020 203H1036L999 299L964 402L952 410z" fill="#565d67" />
      <path d="M901 203H1028L876 628L753 615z" fill="#adbbcd" />
      <path d="M997 298L1194 318L1920 392V498L961 401z" fill="#adbbcd" />

      {/* cut end of the main beam */}
      <path
        d="M753 615L876 628L879 634L833 630Q826 630 829 637L903 740Q907 747 916 748L965 753L970 760L848 748L843 741L888 746Q896 746 895 740L822 636Q816 628 803 626L757 622z"
        fill="#646c78"
      />

      {/* axes */}
      <path d="M965 203L814 621" stroke="#3cc0ee" strokeWidth="1.500" />
      <path d="M914 343L1200 372L1920 445" stroke="#3a66ef" strokeWidth="1.500" />
      <path d={tapDashes} stroke="#7d4650" strokeWidth="1.300" />
      <path d={holeAxes} stroke="#7d3f49" strokeWidth="1.300" />
      <path d={plateAxes} stroke="#9c3a40" strokeWidth="1.200" />
      <g transform="translate(914 343)">
        <path d="M-4-4L4 4M4-4L-4 4" stroke="#c0392b" strokeWidth="2" />
        <path d="M-6-6h3v3h-3zM3-6h3v3H3zM-6 3h3v3h-3zM3 3h3v3H3z" fill="#b50f4d" />
        <circle r="2" fill="#8a5a10" stroke="#f2b01e" strokeWidth="1.500" />
      </g>

      {/* pointer */}
      <path d="M1128.500 642v16.500l4-4 3 6.500 3-1.500-3-6h5z" fill="#fff" stroke="#1a1a2a" strokeWidth="1.200" />
    </svg>
  );
}

function Magnifier({ children }: { children?: React.ReactNode }) {
  return (
    <>
      <path d="M12 12l7 7" stroke="#888" strokeWidth="3" />
      <path d="M12 12l7 7" stroke="#ddd" strokeWidth="1" />
      <circle cx="8" cy="7" r="6" fill="#e3f5fc" stroke="#3f9cc4" strokeWidth="1.600" />
      {children}
    </>
  );
}

const corner = <path d="M21 17v4h-4z" fill="#444" />;

const viewTools: [string, React.ReactNode][] = [
  [
    "Refit",
    <>
      <path d="M1 1h18v18H1z" fill="#fff" stroke="#8f8f8f" strokeWidth="1.400" />
      <path d="M13 13l7 7" stroke="#888" strokeWidth="3" />
      <circle cx="10.500" cy="9.500" r="5" fill="#e3f5fc" stroke="#3f9cc4" strokeWidth="1.600" />
    </>,
  ],
  ["Zoom in", <Magnifier><path d="M8 3.500v7M4.500 7h7" stroke="#0f5f87" strokeWidth="2.200" /></Magnifier>],
  ["Zoom out", <Magnifier><path d="M4.500 7h7" stroke="#0f5f87" strokeWidth="2.200" /></Magnifier>],
  [
    "Repaint",
    <>
      <path d="M1 1h18v18H1z" fill="#4fb0d8" stroke="#999" strokeWidth="1.600" />
      <path d="M2 5h16v2q-4 8-9 8l-7 3z" fill="#fff" />
      <path d="M19 5q-4 7-9 11" stroke="#0f6a99" strokeWidth="2" />
      <path d="M1 3h18" stroke="#bbb" strokeWidth="2" />
    </>,
  ],
  [
    "Rendering",
    <>
      <circle cx="14" cy="5" r="5" fill="url(#ball)" />
      <path d="M8 6h11v7q-6 2-12-2z" fill="#8a8a8a" />
      <circle cx="5.500" cy="14" r="5.500" fill="url(#ball)" />
      {corner}
    </>,
  ],
  [
    "Display style",
    <>
      <path d="M1 5l4-4h14v13l-4 5H1z" fill="#8fd8f2" stroke="#4fa5c4" />
      <path d="M1 5h14v14H1z" fill="#fff" stroke="#4fa5c4" />
      <path d="M2 4.500L5 1.500h13L15 4.500z" fill="#d2f1fb" />
      {corner}
    </>,
  ],
  [
    "Saved orientations",
    <>
      <path d="M5 1h9l5 8-4 9H5L0 10z" fill="#9fdcf2" stroke="#3f9cc4" />
      <path d="M5 1L0 10h10l4-9z" fill="#e6f7fc" stroke="#3f9cc4" />
      <path d="M10 10h9" stroke="#3f9cc4" />
      <path d="M13 11h6v8h-6z" fill="#fff" stroke="#777" />
      <path d="M15 13h2v4h-2z" stroke="#777" />
      {corner}
    </>,
  ],
  [
    "View manager",
    <>
      <path d="M1 1h16v17H1zM1 5h16M1 9h16M1 13h16M5 1v17" fill="#fafafa" stroke="#888" strokeWidth="1.200" />
      <path d="M8 11h3l1-2h4l1 2h3v9H8z" fill="#333" />
      <circle cx="14" cy="15" r="2.600" fill="#777" stroke="#eee" />
    </>,
  ],
  [
    "Perspective",
    <>
      <path d="M1 4l14-3 4 2v12l-7 4-9-4z" fill="#c4e6f3" stroke="#4fa5c4" />
      <path d="M1 4l9 3 9-4M10 7v11M3 14l7-2 8 2" stroke="#4fa5c4" />
      <path d="M10 7l9-4v12l-7 4z" fill="#8cc5de" opacity="0.700" />
    </>,
  ],
  [
    "Section",
    <>
      <path d="M1 6l4-5h14L6 15H1z" fill="#d2f1fb" />
      <path d="M1 18V6l4-4h13" stroke="#5fb4d3" strokeWidth="1.400" />
      <path d="M4 19h11V7h4v8l-4 4" stroke="#888" strokeDasharray="1.500 1.500" />
      <path d="M20 0L1 19" stroke="#0f5f87" strokeWidth="1.800" />
      {corner}
    </>,
  ],
  [
    "Datum display",
    <>
      <path d="M0 1l5 4M5 1L0 5M13 0l-2 5M10 8l-2 4M6 14l-2 5" stroke="#8a6d33" strokeWidth="1.700" />
      <path d="M13 8v7h7M13 15l-4 4M17 13l3 2-3 2M11 9l2-2 2 2" stroke="#8a6d33" strokeWidth="1.400" />
      {corner}
    </>,
  ],
  [
    "Annotation display",
    <>
      <path d="M0 1h11v8H0z" fill="#fdf3d5" stroke="#a39878" />
      <path d="M12 5h6v5M15 8l3 3 2-3" stroke="#444" strokeWidth="1.400" />
      <path d="M8 16q6-6 12 0-6 6-12 0z" fill="#555" />
      <circle cx="14" cy="16" r="2.600" fill="#ddd" stroke="#333" />
    </>,
  ],
  [
    "Spin center",
    <>
      <path d="M4 4l5 6h8M9 10l-5 6" stroke="#444" strokeWidth="1.600" />
      <circle cx="4" cy="3.500" r="3" fill="#5aa845" />
      <circle cx="16.500" cy="10" r="3" fill="#e25c5c" />
      <circle cx="4" cy="16.500" r="3" fill="#2f86b5" />
    </>,
  ],
  [
    "Simulate",
    <>
      <path d="M8 1h3l7 14-2 4H2L0 16z" fill="#c9c9c9" stroke="#aaa" />
      <path d="M9 7l4 8H5z" fill="#f8f9fb" stroke="#999" />
      <circle cx="15" cy="15" r="4.500" fill="#d3d3d3" stroke="#aaa" />
      <path d="M13.500 12.500v5l4-2.500z" fill="#fff" />
    </>,
  ],
  ["Pause", <path d="M3 3h5v14H3zM11 3h5v14h-5z" fill="#999" />],
  [
    "Contour",
    <>
      <path d="M2 3h17v14H2z" fill="#dcdcdc" stroke="#bbb" />
      <path d="M0 5q7 3 7 8t-6 5h9q5-6 1-15H2z" fill="#b5b5b5" />
      <path d="M0 6q6 3 5 7t-5 4z" fill="#f8f9fb" />
    </>,
  ],
];

function GraphicsArea() {
  return (
    <main className="relative min-w-0 flex-1 overflow-hidden bg-[#e8e9ed]">
      <BeamModel />
      <div
        role="toolbar"
        aria-label="View controls"
        className="absolute top-[9px] left-1/2 flex h-10 w-[528px] -translate-x-1/2 items-center border-2 border-[#abafb1] bg-[#f8f9fb] px-[2px]"
      >
        {viewTools.map(([name, art]) => (
          <div key={name} className="flex flex-1 justify-center">
            <button
              type="button"
              aria-label={name}
              className={
                name === "Annotation display"
                  ? "flex h-7 w-7 items-center justify-center border-2 border-[#b5b8ba] bg-[#dfe1e2]"
                  : "flex h-7 w-7 items-center justify-center"
              }
            >
              <Icon box="0 0 21 21" className="h-[21px] w-[21px] shrink-0">
                {art}
              </Icon>
            </button>
          </div>
        ))}
      </div>
    </main>
  );
}

/* ---------- status bar ---------- */

function StatusBar() {
  return (
    <footer className="flex h-[47px] shrink-0 items-center border-t-2 border-[#bccaca] bg-[#f9fbf9] text-[14px] text-[#4a4a4a]">
      <button type="button" aria-label="Toggle navigator" className="ml-2 flex h-[30px] w-7 items-center justify-center border-2 border-[#b0b3b5] bg-[#dfe1e2]">
        <Icon box="0 0 20 20" className="h-5 w-5 shrink-0">
          <path d="M1 1h18v18H1z" fill="#fff" stroke="#777" strokeWidth="1.400" />
          <path d="M1 4h18" stroke="#777" strokeWidth="1.400" />
          <path d="M1 6h6v13H1z" fill="#a9e6fb" stroke="#1c7aa5" strokeWidth="1.400" />
          <path d="M8 16q6-6 12 0-6 5-12 0z" fill="#444" />
          <circle cx="14" cy="16" r="2" fill="#ddd" />
        </Icon>
      </button>
      <button type="button" aria-label="Browser" className="ml-2">
        <Icon box="0 0 20 20" className="h-[21px] w-[21px]">
          <circle cx="10" cy="10" r="8" fill="#2f9fd6" />
          <path d="M4 6q5-5 8-3 1 4-3 5T5 13zM11 10l5-2q2 4-2 8-3-1-3-6z" fill="#bfe9f9" />
          <ellipse cx="10" cy="10" rx="12" ry="4.500" transform="rotate(-45 10 10)" stroke="#777" strokeWidth="1.600" />
        </Icon>
      </button>
      <button type="button" aria-label="Full screen" className="ml-[11px]">
        <Icon box="0 0 21 21" className="h-[21px] w-[21px]">
          <path d="M1 1h19v19H1z" fill="#e6eff4" stroke="#1c7aa5" strokeWidth="1.600" />
        </Icon>
      </button>
      <span className="ml-[14px] h-[30px] w-[2px] bg-[#c3c9cb]" />
      <p role="status" className="mb-2 ml-[7px] flex items-center gap-[7px]">
        <span className="h-[6px] w-[6px] rounded-full bg-[#14618a]" />
        Group created successfully.
      </p>
      <div className="ml-auto flex items-center pr-[22px]">
        <span className="h-[38px] w-[2px] bg-[#c3c9cb]" />
        <span className="ml-1 h-[38px] w-[2px] bg-[#c3c9cb]" />
        <div className="mb-1 ml-[2px] flex h-[30px] border-2 border-[#cdd2d3]">
          <button type="button" aria-label="Find" className="flex w-[33px] items-center justify-center">
            <Icon box="0 0 20 20" className="h-5 w-5">
              <path d="M4 1h5v4h2V1h5l1 5 3 13h-7v-6H8v6H1L4 6z" fill="#333" />
              <path d="M5 7L3 16M15 7l2 9" stroke="#999" strokeWidth="2" />
            </Icon>
          </button>
          <button type="button" aria-label="Find options" className="flex w-[17px] items-center justify-center border-l-2 border-[#cdd2d3]">
            <Caret />
          </button>
        </div>
        <span className="ml-[3px] h-[38px] w-[2px] bg-[#c3c9cb]" />
        <button type="button" aria-label="3D box selection" className="ml-[2px] flex h-9 w-[50px] items-center justify-center border-2 border-[#b5babb]">
          <Icon box="0 0 24 24" className="h-6 w-6">
            <path d="M1 6l5-5h17v16l-5 6H1zM1 6h17v17M18 6l5-5" fill="#fff" stroke="#444" strokeWidth="1.400" />
            <path d="M4 12l3-3v8h8l-2 3H4z" fill="#fbe3b5" stroke="#d59a3a" />
            <path d="M8 9l2-1h6v6l-2 2H8z" fill="#7fcdf0" stroke="#2b8cb4" />
          </Icon>
        </button>
        <div className="relative ml-28 h-[28px] w-[207px]">
          <select
            aria-label="Selection filter"
            defaultValue="Geometry"
            className="h-full w-full appearance-none border-2 border-[#bcc3c4] bg-[#f9f9fa] pl-2 text-[14px] text-[#666]"
          >
            <option>Geometry</option>
          </select>
          <span className="pointer-events-none absolute inset-y-0 right-0 flex w-5 items-center justify-center border-l-2 border-[#bcc3c4]">
            <Caret />
          </span>
        </div>
      </div>
    </footer>
  );
}

export default function App() {
  return (
    <div className="flex h-screen flex-col overflow-hidden bg-[#f8f9fb] font-['Noto_Sans',sans-serif]">
      <Defs />
      <TitleBar />
      <TabBar />
      <Ribbon />
      <div className="flex min-h-0 flex-1">
        <SidePanel />
        <GraphicsArea />
      </div>
      <StatusBar />
    </div>
  );
}
